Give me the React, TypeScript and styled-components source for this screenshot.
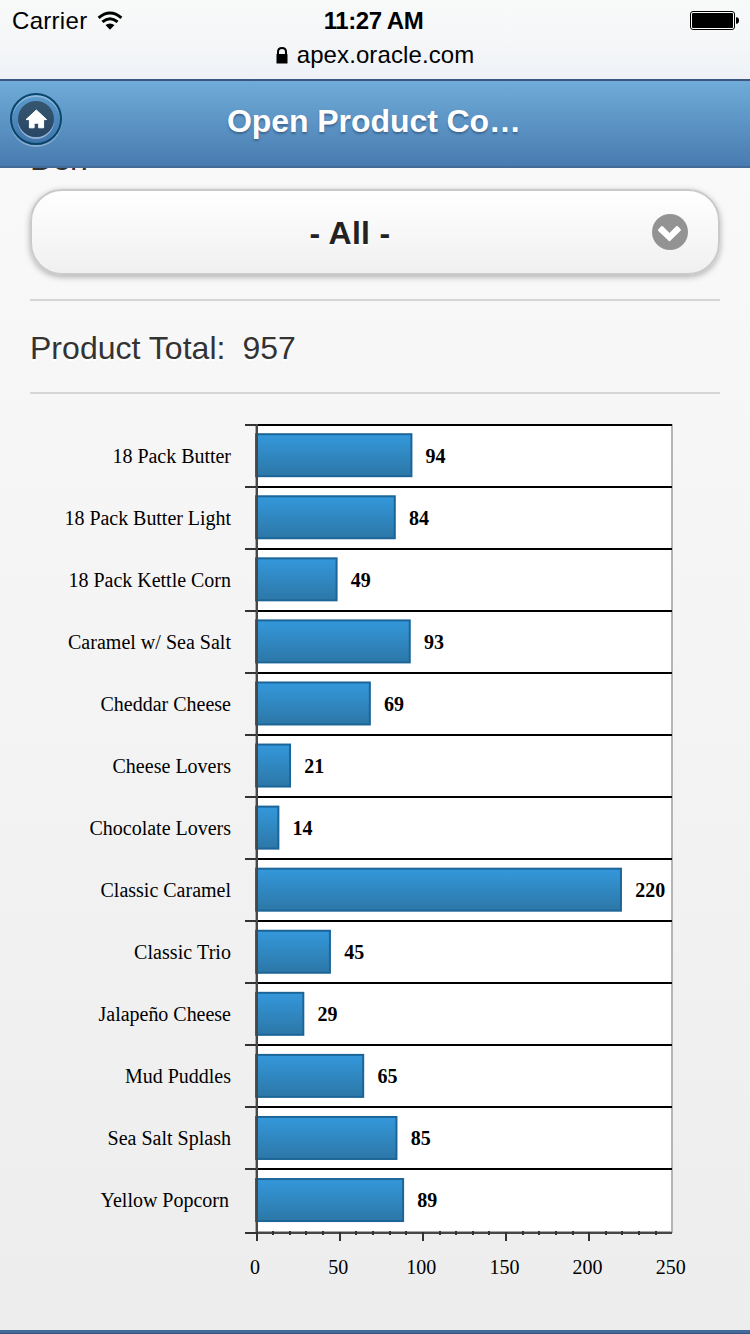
import React from "react";
import styled, { createGlobalStyle } from "styled-components";

const GlobalStyle = createGlobalStyle`
  * { box-sizing: border-box; }
  body { margin: 0; background: #eeeeee; }
`;

const sans = `"Liberation Sans", Helvetica, Arial, sans-serif`;

const Screen = styled.div`
  width: 750px;
  height: 1334px;
  overflow: hidden;
  display: flex;
  flex-direction: column;
  font-family: ${sans};
  background: linear-gradient(#f9f9f9 168px, #ededed 1330px);
`;

const BrowserBar = styled.div`
  flex: none;
  height: 79px;
  background: linear-gradient(#f8f9f9, #f6f7f8 45%, #eef2f7);
  color: #000;
`;

const StatusRow = styled.div`
  display: grid;
  grid-template-columns: 1fr auto 1fr;
  align-items: center;
  height: 41px;
  padding: 0 11px 0 12px;
`;

const Carrier = styled.div`
  display: flex;
  align-items: center;
  gap: 10px;
  font-size: 24px;
  letter-spacing: 0.3px;
`;

const Clock = styled.div`
  margin-right: 4px;
  font-size: 24px;
  font-weight: 700;
  letter-spacing: -0.45px;
`;

const BatterySlot = styled.div`
  display: flex;
  justify-content: flex-end;
`;

const AddressRow = styled.div`
  display: flex;
  justify-content: center;
  align-items: center;
  gap: 9px;
  height: 28px;
  font-size: 24px;
  letter-spacing: 0.1px;
`;

const Header = styled.header`
  flex: none;
  height: 89px;
  display: grid;
  grid-template-columns: 52px 1fr 52px;
  align-items: center;
  padding: 0 10px;
  border-top: 2px solid #3b577f;
  border-bottom: 2px solid #446a97;
  background: linear-gradient(#6facd9, #497bb0);
  position: relative;
`;

const HomeButton = styled.button`
  width: 52px;
  height: 52px;
  margin: 0 0 9px;
  padding: 0;
  border: 2px solid #09466b;
  border-radius: 50%;
  display: flex;
  align-items: center;
  justify-content: center;
  background: linear-gradient(#5b9bcd, #4075ab);
  box-shadow: inset 0 2px 0 rgba(255, 255, 255, 0.3), 0 2px 0 rgba(255, 255, 255, 0.3);
`;

const HomeDisc = styled.span`
  width: 36px;
  height: 36px;
  border-radius: 50%;
  display: flex;
  align-items: center;
  justify-content: center;
  background: linear-gradient(#36566f, #294766);
  box-shadow: 0 2px 0 rgba(255, 255, 255, 0.4);
`;

const Title = styled.h1`
  margin: 0 2px 6px 0;
  text-align: center;
  font-size: 32px;
  line-height: 40px;
  font-weight: 700;
  letter-spacing: -0.07px;
  color: #fff;
  text-shadow: 0 2px 2px #3e6790;
`;

const Content = styled.main`
  flex: 1;
  min-height: 0;
  overflow: hidden;
  display: flex;
  flex-direction: column;
`;

const FieldLabel = styled.label`
  flex: none;
  height: 21px;
  display: flex;
  align-items: flex-end;
  overflow: hidden;
  padding: 0 30px 12px;
  font-size: 32px;
  line-height: 36px;
  letter-spacing: -0.4px;
  color: #333;
`;

const Select = styled.button`
  flex: none;
  height: 86px;
  margin: 0 30px;
  padding: 0 30px 0 50px;
  display: flex;
  align-items: center;
  border: 2px solid #cacaca;
  border-radius: 32px;
  background: linear-gradient(#fff, #f0f0f0);
  box-shadow: 0 2px 6px rgba(0, 0, 0, 0.3);
  font: 700 32px ${sans};
  color: #222;
  text-shadow: 0 2px 0 #fff;
`;

const SelectValue = styled.span`
  flex: 1;
  padding: 2px 34px 0 0;
  text-align: center;
  letter-spacing: 0.3px;
`;

const TotalRow = styled.div`
  flex: none;
  height: 95px;
  margin: 24px 30px 1px;
  display: flex;
  align-items: center;
  gap: 17px;
  border-top: 2px solid #d6d6d6;
  border-bottom: 2px solid #d6d6d6;
  padding-top: 3px;
  font-size: 32px;
  color: #333;
  text-shadow: 0 2px 0 #fff;
`;

const TotalLabel = styled.span`
  letter-spacing: 0.03px;
`;

const ChartArea = styled.section`
  height: 900px;
  flex: none;
`;

const Chart = styled.svg`
  display: block;
  font-family: "Liberation Serif", "Times New Roman", serif;
  font-size: 20px;
`;

const Footer = styled.footer`
  flex: none;
  height: 4px;
  background: #426b9b;
  border-bottom: 1px solid #365279;
`;

const rows: { name: string; value: number; width: number; end?: number }[] = [
  { name: "18 Pack Butter", value: 94, width: 118.5 },
  { name: "18 Pack Butter Light", value: 84, width: 166.5 },
  { name: "18 Pack Kettle Corn", value: 49, width: 162.5 },
  { name: "Caramel w/ Sea Salt", value: 93, width: 163 },
  { name: "Cheddar Cheese", value: 69, width: 130.5 },
  { name: "Cheese Lovers", value: 21, width: 118.5 },
  { name: "Chocolate Lovers", value: 14, width: 141.5 },
  { name: "Classic Caramel", value: 220, width: 130.5 },
  { name: "Classic Trio", value: 45, width: 97 },
  { name: "Jalapeño Cheese", value: 29, width: 132.5 },
  { name: "Mud Puddles", value: 65, width: 106 },
  { name: "Sea Salt Splash", value: 85, width: 123.5 },
  { name: "Yellow Popcorn", value: 89, width: 128.5, end: 229 },
];

const ORIGIN = 256;
const UNIT = 1.663;
const TOP = 29;
const BOTTOM = 837;
const minorTicks = Array.from({ length: 25 }, (_, i) => i * 10).filter((v) => v % 50 !== 0);
const majorTicks = [0, 50, 100, 150, 200, 250];

function ProductChart() {
  return (
    <Chart width="750" height="900" viewBox="0 0 750 900">
      <defs>
        <linearGradient id="bar" x1="0" y1="0" x2="0" y2="1">
          <stop offset="0" stopColor="#3498db" />
          <stop offset="1" stopColor="#2c77a7" />
        </linearGradient>
      </defs>
      <rect x="256" y={TOP} width="415" height="808" fill="#fff" />
      <path d={`M672 ${TOP}V838`} stroke="#b5b5b5" strokeWidth="2" />
      {rows.map((row, i) => (
        <path key={row.name} d={`M256 ${TOP + 1 + i * 62}H672`} stroke="#000" strokeWidth="2" />
      ))}
      <path d={`M255.5 ${TOP}V838 M256 836.5H672`} stroke="#aaa" />
      {rows.map((row, i) => {
        const y = 39.2 + i * 62.07;
        const w = row.value * UNIT;
        return (
          <g key={row.name}>
            <rect x={ORIGIN} y={y} width={w - 0.9} height="42" fill="url(#bar)" stroke="#1c6598" strokeWidth="2" />
            <text x={row.end ?? 231} y={67.5 + i * 62.08} textAnchor="end" textLength={row.width}>
              {row.name}
            </text>
            <text x={ORIGIN + w + 13.3} y={67.5 + i * 62.08} fontWeight="700">
              {row.value}
            </text>
          </g>
        );
      })}
      <path d={`M257 ${TOP}V838 M256 838H672`} stroke="#474747" strokeWidth="2" />
      {Array.from({ length: 14 }, (_, i) => (
        <path key={i} d={`M245 ${TOP + 1 + i * 62 + (i === 13 ? 2 : 0)}H256`} stroke="#333" strokeWidth="2" />
      ))}
      {minorTicks.map((v) => (
        <path key={v} d={`M${Math.round(256.6 + v * UNIT)} 836V840`} stroke="#333" strokeWidth="2" />
      ))}
      {majorTicks.map((v) => (
        <g key={v}>
          {v < 250 && <path d={`M${Math.round(256.6 + v * 1.66)} ${BOTTOM}V846`} stroke="#333" strokeWidth="2" />}
          <text x={255 + v * UNIT} y="878.5" textAnchor="middle">
            {v}
          </text>
        </g>
      ))}
    </Chart>
  );
}

export default function App() {
  return (
    <Screen>
      <GlobalStyle />
      <BrowserBar>
        <StatusRow>
          <Carrier>
            Carrier
            <svg width="26" height="20" viewBox="0 0 26 20">
              <g fill="none" stroke="#000" strokeWidth="3">
                <path d="M1.6 6.8Q13 -2.8 24.4 6.8" />
                <path d="M5.4 10.9Q13 4.6 20.6 10.9" />
              </g>
              <path d="M8.5 14Q13 10.8 17.5 14L13 18.8Z" />
            </svg>
          </Carrier>
          <Clock>11:27 AM</Clock>
          <BatterySlot>
            <svg width="49" height="19" viewBox="0 0 49 19">
              <rect x="0.5" y="0.5" width="44" height="18" rx="2.5" fill="#fff" stroke="#000" />
              <rect x="2" y="2" width="41" height="15" rx="1" />
              <path d="M46 6.2Q49 6 49 9.5T46 12.8Z" />
            </svg>
          </BatterySlot>
        </StatusRow>
        <AddressRow>
          <svg width="12" height="17" viewBox="0 0 12 17">
            <path d="M2 8V5Q2 1 6 1T10 5V8" fill="none" stroke="#000" strokeWidth="2" />
            <rect x="0.5" y="7" width="11" height="9.5" rx="0.6" />
          </svg>
          apex.oracle.com
        </AddressRow>
      </BrowserBar>
      <Header>
        <HomeButton aria-label="Home">
          <HomeDisc>
            <svg width="22" height="20" viewBox="0 0 22 20">
              <path
                d="M11.3 1L21.6 10.6H18.6V18.8H13.7V14.2H9.1V18.8H4.4V10.6H1Z"
                fill="#fff"
                stroke="#fff"
                strokeWidth="1"
                strokeLinejoin="round"
              />
            </svg>
          </HomeDisc>
        </HomeButton>
        <Title>Open Product Co…</Title>
      </Header>
      <Content>
        <FieldLabel>Den</FieldLabel>
        <Select>
          <SelectValue>- All -</SelectValue>
          <svg width="36" height="36" viewBox="0 0 36 36">
            <circle cx="18" cy="18" r="18" fill="#939393" />
            <path
              d="M6.2 15.6L9.2 12.3Q10 11.7 10.8 12.3L17.5 18.9L24.2 12.3Q25 11.7 25.8 12.3L28.8 15.4Q29.2 16.2 28.6 16.8L17.5 27.5L6.3 16.9Q5.8 16.2 6.2 15.6Z"
              fill="#fff"
            />
          </svg>
        </Select>
        <TotalRow>
          <TotalLabel>Product Total:</TotalLabel>
          <span>957</span>
        </TotalRow>
        <ChartArea>
          <ProductChart />
        </ChartArea>
      </Content>
      <Footer />
    </Screen>
  );
}
